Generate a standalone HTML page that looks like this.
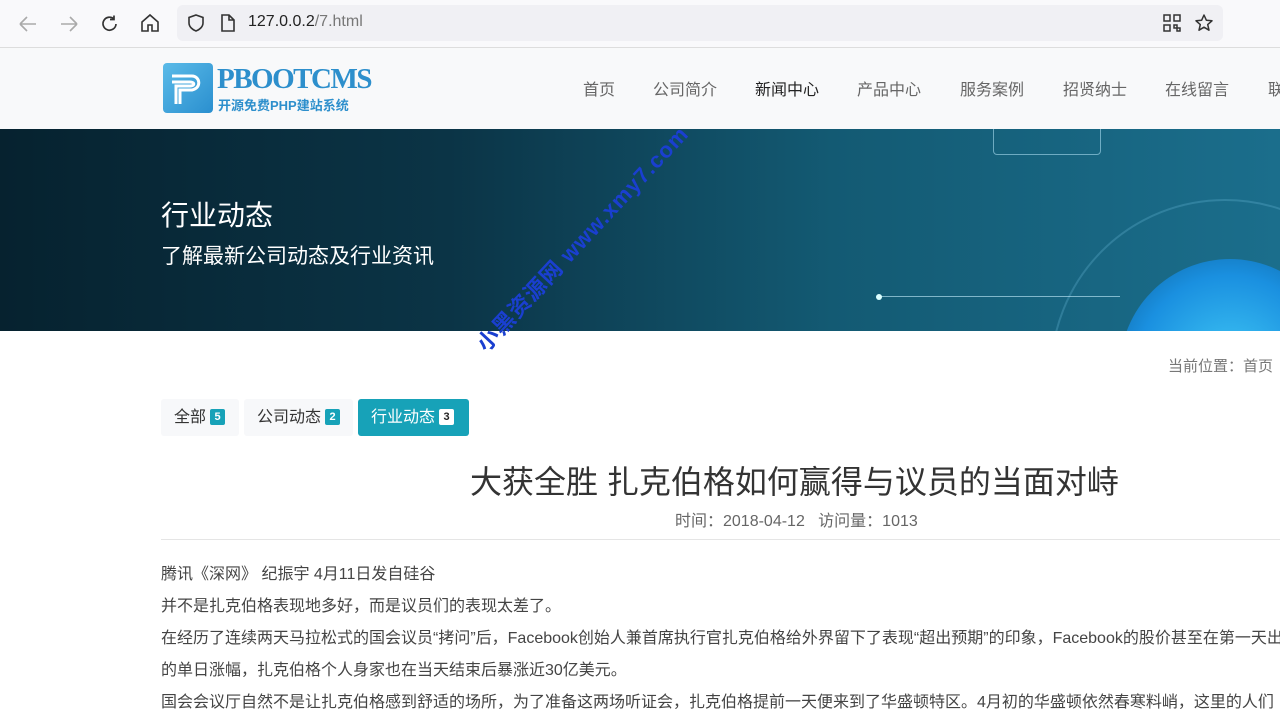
<!DOCTYPE html>
<html><head><meta charset="utf-8"><style>
*{margin:0;padding:0;box-sizing:border-box}
body{width:1280px;height:700px;overflow:hidden;background:#fff;font-family:"Liberation Sans","Noto Sans CJK SC",sans-serif;color:#333;position:relative}
.bar{position:absolute;left:0;top:0;width:1280px;height:48px;background:#f9f9fb;border-bottom:1px solid #ddd}
.url{position:absolute;left:177px;top:5px;width:1046px;height:36px;background:#f0f0f4;border-radius:6px}
.url span{position:absolute;left:71px;top:8px;font-size:16px;color:#222}
.hdr{position:absolute;left:0;top:48px;width:1280px;height:81px;background:#f8f9fa}
.nav a{position:absolute;top:28px;font-size:16px;color:#666;white-space:nowrap}
.banner{position:absolute;left:0;top:129px;width:1280px;height:202px;background:linear-gradient(90deg,#06222f 0%,#0b3446 35%,#135a73 65%,#1b6e8c 100%);overflow:hidden}
.tabs div{position:absolute;top:399px;height:37px;border-radius:3px;background:#f7f8fa;font-size:16px;line-height:37px;padding-left:13px}
.b{display:inline-block;background:#17a2b8;color:#fff;font-size:11px;font-weight:bold;border-radius:2px;width:15px;height:16px;line-height:16px;text-align:center;vertical-align:2px;margin-left:4px}
p{position:absolute;left:161px;font-size:16px;color:#444;white-space:nowrap}
</style></head><body>
<div class="bar">
<svg style="position:absolute;left:17px;top:14px" width="22" height="20"><path d="M3 10H19M3 10L10 3M3 10L10 17" stroke="#aaa" stroke-width="1.6" fill="none"/></svg>
<svg style="position:absolute;left:58px;top:14px" width="22" height="20"><path d="M3 10H19M19 10L12 3M19 10L12 17" stroke="#aaa" stroke-width="1.6" fill="none"/></svg>
<svg style="position:absolute;left:100px;top:14px" width="20" height="20"><path d="M16 10A6.5 6.5 0 1 1 14 5M14 1.5V5.5H10" stroke="#333" stroke-width="1.7" fill="none"/></svg>
<svg style="position:absolute;left:140px;top:13px" width="20" height="20"><path d="M2 9L10 2L18 9V18H12V12H8V18H2Z" stroke="#333" stroke-width="1.6" fill="none"/></svg>
<div class="url">
<svg style="position:absolute;left:9px;top:8px" width="20" height="20"><path d="M10 2L17 4.5V10C17 14 13 17 10 18C7 17 3 14 3 10V4.5Z" stroke="#333" stroke-width="1.6" fill="none"/></svg>
<svg style="position:absolute;left:42px;top:8px" width="18" height="20"><path d="M3 2H10L15 7V18H3Z M10 2V7H15" stroke="#333" stroke-width="1.6" fill="none"/></svg>
<span>127.0.0.2<span style="position:static;color:#777">/7.html</span></span>
<svg style="position:absolute;left:986px;top:9px" width="18" height="18"><path d="M1 1h6v6H1zM11 1h6v6h-6zM1 11h6v6H1zM11 11h3v3h-3zM14 14h3v3h-3z" stroke="#333" stroke-width="1.5" fill="none"/></svg>
<svg style="position:absolute;left:1017px;top:8px" width="20" height="20"><path d="M10 2L12.4 7.3L18 7.8L13.7 11.6L15 17.2L10 14.2L5 17.2L6.3 11.6L2 7.8L7.6 7.3Z" stroke="#333" stroke-width="1.5" fill="none" stroke-linejoin="round"/></svg>
</div></div>
<div class="hdr">
<div style="position:absolute;left:163px;top:15px;width:50px;height:50px;border-radius:4px;background:linear-gradient(135deg,#5bbbe8,#2a8fcf)"></div>
<svg style="position:absolute;left:166px;top:22px" width="42" height="40"><path d="M6 6H26C34 6 36 18 26 20H14V34M6 12H24C29 12 29 16 24 16H10V34" stroke="#fff" stroke-width="3" fill="none"/></svg>
<div style="position:absolute;left:217px;top:15px;font-family:'Liberation Serif',serif;font-weight:bold;font-size:29px;color:#2d8fcc;letter-spacing:-1.5px">PBOOTCMS</div>
<div style="position:absolute;left:218px;top:47px;font-size:13px;font-weight:bold;color:#2d8fcc">开源免费PHP建站系统</div>
<div class="nav"><a style="left:583px">首页</a><a style="left:653px">公司简介</a><a style="left:755px;color:#222">新闻中心</a><a style="left:857px">产品中心</a><a style="left:960px">服务案例</a><a style="left:1063px">招贤纳士</a><a style="left:1165px">在线留言</a><a style="left:1268px">联系我们</a></div>
</div>
<div class="banner">
<div style="position:absolute;left:1120px;top:130px;width:220px;height:220px;border-radius:50%;background:radial-gradient(circle,#40c8f5,#1a90e0 60%,#0c5f9a)"></div>
<div style="position:absolute;left:1050px;top:70px;width:350px;height:350px;border-radius:50%;border:2px solid rgba(120,200,230,.25)"></div>
<div style="position:absolute;left:993px;top:-5px;width:108px;height:31px;border:1px solid rgba(170,220,240,.6);border-radius:4px"></div>
<div style="position:absolute;left:880px;top:167px;width:240px;height:1px;background:rgba(200,240,255,.6)"></div>
<div style="position:absolute;left:876px;top:165px;width:6px;height:6px;border-radius:50%;background:#dff"></div>
<div style="position:absolute;left:161px;top:65px;font-size:28px;color:#fff">行业动态</div>
<div style="position:absolute;left:161px;top:111px;font-size:21px;color:#fff">了解最新公司动态及行业资讯</div>
</div>
<div style="position:absolute;left:468px;top:336px;transform:rotate(-47deg);transform-origin:left top;font-size:22px;font-weight:bold;color:#1a3fd0;white-space:nowrap;letter-spacing:1px">小黑资源网 www.xmy7.com</div>
<div style="position:absolute;left:1168px;top:355px;font-size:15px;color:#777;white-space:nowrap">当前位置：首页</div>
<div class="tabs">
<div style="left:161px;width:78px">全部<span class="b">5</span></div>
<div style="left:244px;width:109px">公司动态<span class="b">2</span></div>
<div style="left:358px;width:111px;background:#17a2b8;color:#fff">行业动态<span class="b" style="background:#fff;color:#222">3</span></div>
</div>
<div style="position:absolute;left:470px;top:457px;font-size:32px;color:#333;white-space:nowrap">大获全胜 扎克伯格如何赢得与议员的当面对峙</div>
<div style="position:absolute;left:675px;top:507px;font-size:16px;color:#666;white-space:nowrap">时间：2018-04-12 &nbsp; 访问量：1013</div>
<div style="position:absolute;left:161px;top:539px;width:1119px;height:1px;background:#e5e5e5"></div>
<p style="top:560px">腾讯《深网》 纪振宇 4月11日发自硅谷</p>
<p style="top:592px">并不是扎克伯格表现地多好，而是议员们的表现太差了。</p>
<p style="top:624px">在经历了连续两天马拉松式的国会议员“拷问”后，Facebook创始人兼首席执行官扎克伯格给外界留下了表现“超出预期”的印象，Facebook的股价甚至在第一天出现</p>
<p style="top:656px">的单日涨幅，扎克伯格个人身家也在当天结束后暴涨近30亿美元。</p>
<p style="top:688px">国会会议厅自然不是让扎克伯格感到舒适的场所，为了准备这两场听证会，扎克伯格提前一天便来到了华盛顿特区。4月初的华盛顿依然春寒料峭，这里的人们</p>
</body></html>
